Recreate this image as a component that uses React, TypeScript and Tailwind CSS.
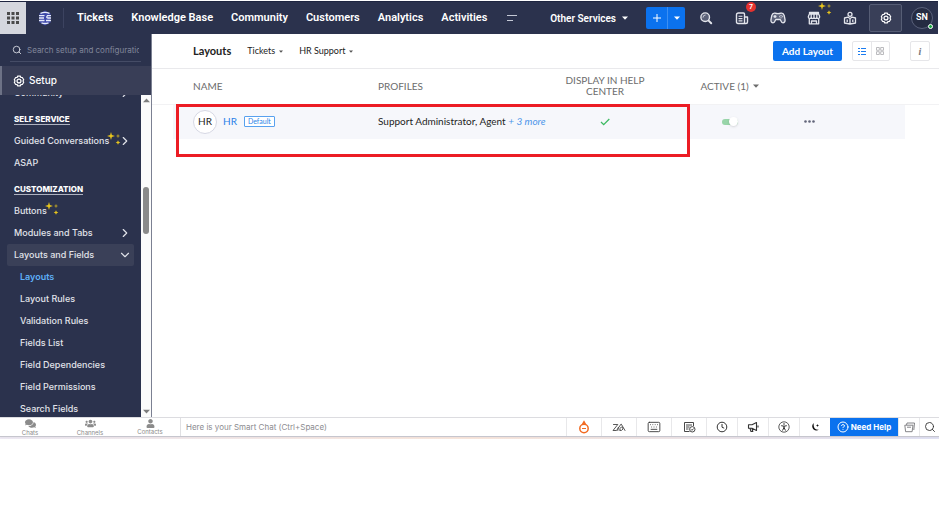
import { useState } from "react";
import type { ReactNode } from "react";
import { ChevronDown, ChevronRight, CircleHelp, Keyboard, Search } from "lucide-react";
import { FaComments, FaUser, FaUsers } from "react-icons/fa";

const tabs = ["Tickets", "Knowledge Base", "Community", "Customers", "Analytics", "Activities"];

const layoutLinks = [
  "Layouts",
  "Layout Rules",
  "Validation Rules",
  "Fields List",
  "Field Dependencies",
  "Field Permissions",
  "Search Fields",
];

function Caret({ className = "h-1 w-1.5" }: { className?: string }) {
  return (
    <svg viewBox="0 0 6 4" className={className} fill="currentColor">
      <path d="M0 .5h6L3 3.7z" />
    </svg>
  );
}

function Sparkles({ className = "" }: { className?: string }) {
  return (
    <svg viewBox="0 0 14 14" className={`h-3.5 w-3.5 ${className}`} fill="#e8c51c">
      <path d="M4 0l.9 3.1L8 4l-3.1.9L4 8l-.9-3.1L0 4l3.1-.9z" />
      <path d="M11 1.800l.6 1.600 1.600.6-1.600.6-.6 1.600-.6-1.600L8.800 4l1.600-.6z" opacity=".75" />
      <path d="M11 8.200l.7 1.600 1.600.7-1.600.7-.7 1.600-.7-1.600-1.600-.7 1.600-.7z" />
    </svg>
  );
}

function GearIcon({ className = "" }: { className?: string }) {
  return (
    <svg viewBox="0 0 14 14" className={className} fill="none" stroke="currentColor" strokeWidth="1.400" strokeLinejoin="round">
      <path d="M5.500 1.300h3l.7 1.500 1.700.1 1.600 2.600-.9 1.500.9 1.500-1.600 2.600-1.700.1-.7 1.500h-3l-.7-1.500-1.700-.1L1.500 8.500 2.400 7l-.9-1.500 1.600-2.600 1.700-.1z" />
      <circle cx="7" cy="7" r="2.300" />
    </svg>
  );
}

function Logo() {
  return (
    <svg viewBox="0 0 14 16" className="h-4 w-3.5">
      <path d="M7 .5l5.500 3v9l-5.500 3-5.500-3v-9z" fill="#3c46a8" />
      <path
        d="M2.500 3.300Q7 1.300 11.500 3.300M1 5.600h5.500M1 8h5M1 10.500h5.500M13 5.600H9.500Q7.800 8 10 8h3M13 10.500H8M3.500 12.900q3.500 1.200 7 0"
        fill="none"
        stroke="#e6ebfa"
        strokeWidth="1.300"
      />
    </svg>
  );
}

function HeaderButton({ label, children }: { label: string; children: ReactNode }) {
  return (
    <button aria-label={label} className="relative flex h-7 w-9 items-center justify-center text-[#e3e5ec]">
      {children}
    </button>
  );
}

function TopBar() {
  return (
    <header className="mt-px mr-px flex h-[33px] shrink-0 items-center border-t border-[#1e2540] bg-[#2b324d] font-['Roboto','Inter',sans-serif] text-[11px] font-semibold text-white">
      <button aria-label="Apps" className="flex h-full w-[26px] items-center justify-center bg-[#d5d7de]">
        <svg viewBox="0 0 12 12" className="h-3 w-3" fill="#4a4a4a">
          {[0, 4.5, 9].map((y) =>
            [0, 4.5, 9].map((x) => <rect key={`${x}-${y}`} x={x} y={y} width="3" height="3" />),
          )}
        </svg>
      </button>
      <a href="#home" aria-label="Home" className="flex h-5 w-[38px] items-center justify-center border-r border-[#3c4360]">
        <Logo />
      </a>
      <nav className="ml-[13px] flex items-center gap-[18px] whitespace-nowrap">
        {tabs.map((tab) => (
          <a key={tab} href="#tab">
            {tab}
          </a>
        ))}
      </nav>
      <button aria-label="More tabs" className="ml-5">
        <svg viewBox="0 0 10 6" className="h-1.5 w-2.5" stroke="#c5c9d6">
          <path d="M0 .5h10M0 5.500h6" />
        </svg>
      </button>
      <div className="ml-auto flex items-center">
        <button className="mr-[18px] flex items-center gap-1.5 text-[10px] whitespace-nowrap">
          Other Services <Caret />
        </button>
        <div className="mr-[3px] flex h-[22px] overflow-hidden rounded-xs bg-[#0b72ee]">
          <button aria-label="Add" className="flex w-[22px] items-center justify-center border-r border-[#3c8ff2]">
            <svg viewBox="0 0 8 8" className="h-2 w-2" stroke="white">
              <path d="M4 0v8M0 4h8" />
            </svg>
          </button>
          <button aria-label="Add options" className="flex w-[17px] items-center justify-center">
            <Caret />
          </button>
        </div>
        <HeaderButton label="Search">
          <svg viewBox="0 0 14 14" className="h-3.5 w-3.5" fill="none" stroke="currentColor" strokeWidth="1.400" strokeLinecap="round">
            <circle cx="6.200" cy="6.200" r="4.300" fill="#5a6078" />
            <path d="M4 6.200A2.200 2.200 0 0 1 6.200 4" strokeWidth=".8" />
            <path d="M9.600 9.600l2.600 2.600" strokeWidth="2" />
          </svg>
        </HeaderButton>
        <HeaderButton label="Notifications">
          <svg viewBox="0 0 14 14" className="h-3.5 w-3.5" fill="none" stroke="currentColor" strokeWidth="1.400" strokeLinejoin="round">
            <path d="M3.500 2h5q1 0 1 1v9.500H3q-1.500 0-1.500-1.500V4q0-2 2-2zM9.500 6h3v5q0 1.500-1.500 1.500H9" />
            <path d="M3.500 5.300h4M3.500 7.600h4M3.500 9.900h4" strokeWidth="1.100" />
          </svg>
          <span className="absolute -top-0.5 right-1 flex h-2.5 w-2.5 items-center justify-center rounded-full bg-[#e5322f] text-[7px] text-white">
            7
          </span>
        </HeaderButton>
        <HeaderButton label="Gamescope">
          <svg viewBox="0 0 16 14" className="h-3.5 w-4" fill="none" stroke="currentColor" strokeWidth="1.300" strokeLinejoin="round">
            <path d="M5 2.200q3 1 6 0 2.300-.5 3.200 2.300l.9 4.500q0 2.800-2.200 2.800-1.400 0-2-2l-.7-1.300H5.800l-.7 1.300q-.6 2-2 2Q.9 11.800.9 9l.9-4.500q.9-2.800 3.200-2.300z" fill="#5a6078" />
            <path d="M5 4v3M3.500 5.500h3M9.300 5.500h.9M11.800 5.500h.9M11 3.900v.8M11 6.400v.8" />
          </svg>
        </HeaderButton>
        <HeaderButton label="Marketplace">
          <svg viewBox="0 0 14 14" className="h-3.5 w-3.5" fill="none" stroke="currentColor" strokeWidth="1.300" strokeLinejoin="round">
            <path d="M2.500 1.500h9v1.500h-9zM2 3.500L1.300 6q0 1.500 1.400 1.500T4.200 6q0 1.500 1.400 1.500T7 6q0 1.500 1.400 1.500T9.800 6q0 1.500 1.400 1.500T12.700 6L12 3.500M4.200 6V3.500M7 6V3.500M9.800 6V3.500" />
            <path d="M2.300 8v4.800h9.400V8M4.500 12.500V10h5v2.500" />
          </svg>
          <Sparkles className="absolute -top-0.5 right-0" />
        </HeaderButton>
        <HeaderButton label="Help resources">
          <svg viewBox="0 0 14 14" className="h-3.5 w-3.5" fill="none" stroke="currentColor" strokeWidth="1.300" strokeLinejoin="round">
            <circle cx="7" cy="3.300" r="2" />
            <path d="M7 7.500L5 6.200 1.500 7v5L7 13l5.500-1V7L9 6.200zM7 7.500V13M4.200 8.500v2.500M9.800 8.500v2.500" />
          </svg>
        </HeaderButton>
        <button aria-label="Setup" className="ml-px flex h-7 w-[33px] items-center justify-center rounded-xs border border-[#565d75] bg-[#393f58]">
          <GearIcon className="h-3 w-3" />
        </button>
        <button aria-label="Profile" className="relative mr-[5px] ml-[9px] flex h-[22px] w-[22px] items-center justify-center rounded-full border border-[#59607a] bg-[#252b42] text-[9px]">
          SN
          <span className="absolute -right-px -bottom-px h-[5px] w-[5px] rounded-full border border-white bg-[#17a83c]" />
        </button>
      </div>
    </header>
  );
}

function SideItem({ label, icon, isNew }: { label: string; icon?: "right" | "down"; isNew?: boolean }) {
  return (
    <a
      href="#section"
      className={`mr-[7px] ml-[7px] flex h-[22px] items-center rounded-xs pr-0.5 pl-[7px] ${icon === "down" ? "bg-[#3a4058]" : ""}`}
    >
      <span className="whitespace-nowrap">{label}</span>
      {isNew && <Sparkles className="-mt-1 -mr-1 -ml-0.5 shrink-0" />}
      {icon === "right" && <ChevronRight size={14} className="ml-auto shrink-0" />}
      {icon === "down" && <ChevronDown size={14} className="ml-auto shrink-0" />}
    </a>
  );
}

function SideHeading({ children }: { children: ReactNode }) {
  return (
    <h2 className="mt-[5px] flex h-[21px] items-center pl-3.5 text-[8px] font-extrabold text-white">
      <span className="border-b border-[#aeb2c0] leading-[10px]">{children}</span>
    </h2>
  );
}

function Sidebar() {
  return (
    <aside className="flex w-[152px] shrink-0 flex-col border-r border-[#7b8092] bg-[#2b324d] text-[9px] font-medium text-[#e1e3ea]">
      <label className="mx-2.5 flex h-7 shrink-0 items-center gap-[5px] border-b border-[#454c66] pt-1 pr-0.5 pl-0.5">
        <Search size={10} className="shrink-0" />
        <input
          aria-label="Search setup"
          placeholder="Search setup and configuration"
          className="w-full min-w-0 text-[8px] font-normal outline-none placeholder:text-[#81869a]"
        />
      </label>
      <div className="mt-1 flex h-[29px] shrink-0 items-center gap-1 border-l-2 border-[#6d7286] bg-[#393e57] pl-[11px] text-[10px] text-white">
        <GearIcon className="h-3 w-3" />
        Setup
      </div>
      <div className="flex min-h-0 flex-1">
        <nav className="min-w-0 flex-1 overflow-hidden">
          <div className="-mt-[13px]">
            <SideItem label="Community" icon="right" />
            <SideHeading>SELF SERVICE</SideHeading>
            <SideItem label="Guided Conversations" icon="right" isNew />
            <SideItem label="ASAP" />
            <SideHeading>CUSTOMIZATION</SideHeading>
            <SideItem label="Buttons" isNew />
            <SideItem label="Modules and Tabs" icon="right" />
            <SideItem label="Layouts and Fields" icon="down" />
            {layoutLinks.map((link) => (
              <a
                key={link}
                href="#layouts"
                className={`flex h-[22px] items-center pl-5 ${link === "Layouts" ? "font-semibold text-[#5fb0f8]" : ""}`}
              >
                {link}
              </a>
            ))}
          </div>
        </nav>
        <div className="flex w-2.5 flex-col items-center bg-[#fbfbfb] py-[3px] text-[#7d7d7d]">
          <Caret className="h-[5px] w-[7px] rotate-180" />
          <span className="mt-[84px] h-[47px] w-1.5 rounded-full bg-[#8a8a8a]" />
          <Caret className="mt-auto h-[5px] w-[7px]" />
        </div>
      </div>
    </aside>
  );
}

function LayoutsTable() {
  const [active, setActive] = useState(true);

  return (
    <div className="relative">
      <table className="w-full table-fixed text-left">
        <colgroup>
          <col className="w-[21px]" />
          <col className="w-[185px]" />
          <col className="w-[197px]" />
          <col className="w-[100px]" />
          <col className="w-[149px]" />
          <col />
          <col className="w-[34px]" />
        </colgroup>
        <thead>
          <tr className="h-[35px] border-b border-[#f2f2f4] text-[10px] leading-[11px] text-[#6c6c6c]">
            <td />
            <th className="pl-5 font-normal">NAME</th>
            <th className="pl-5 font-normal">PROFILES</th>
            <th className="px-1 text-center font-normal">DISPLAY IN HELP CENTER</th>
            <th className="text-center font-normal">
              <button className="inline-flex items-center gap-1">
                ACTIVE (1) <Caret />
              </button>
            </th>
            <td />
            <td />
          </tr>
        </thead>
        <tbody>
          <tr className="h-[35px] text-[10px] text-[#1d1d1d]">
            <td />
            <td className="bg-[#f6f7fb] pl-5">
              <div className="flex items-center">
                <span className="flex h-6 w-6 items-center justify-center rounded-full border border-[#d6d8e4] bg-white">HR</span>
                <a href="#hr" className="ml-1.5 text-[#2a7fe8]">
                  HR
                </a>
                <span className="ml-[7px] rounded-[1px] border border-[#58a1ef] bg-white px-[3px] text-[7px] leading-[9px] text-[#2a85e8]">
                  Default
                </span>
              </div>
            </td>
            <td className="bg-[#f6f7fb] pl-5 whitespace-nowrap">
              Support Administrator, Agent{" "}
              <a href="#more" className="text-[#4c96ea] italic">
                + 3 more
              </a>
            </td>
            <td className="bg-[#f6f7fb]">
              <svg viewBox="0 0 10 8" className="mx-auto h-2 w-2.5" fill="none" stroke="#3dba62" strokeWidth="1.300">
                <path d="M1 4l2.700 2.700L9.300 1" />
              </svg>
            </td>
            <td className="bg-[#f6f7fb]">
              <label className="relative mx-auto flex w-4 cursor-pointer items-center">
                <input
                  type="checkbox"
                  role="switch"
                  aria-label="Active"
                  className="peer sr-only"
                  checked={active}
                  onChange={(e) => setActive(e.target.checked)}
                />
                <span className="flex h-1.5 w-4 items-center rounded-full bg-gray-300 peer-checked:justify-end peer-checked:bg-[#98d5a9]">
                  <span className="h-[9px] w-[9px] rounded-full bg-white shadow-sm" />
                </span>
              </label>
            </td>
            <td className="bg-[#f6f7fb]">
              <button aria-label="More actions" className="flex items-center">
                <svg viewBox="0 0 11 3" className="h-[3px] w-[11px]" fill="#626579">
                  <circle cx="1.500" cy="1.500" r="1.300" />
                  <circle cx="5.500" cy="1.500" r="1.300" />
                  <circle cx="9.500" cy="1.500" r="1.300" />
                </svg>
              </button>
            </td>
            <td />
          </tr>
        </tbody>
      </table>
      <div className="pointer-events-none absolute top-[35px] left-6 h-[53px] w-[514px] border-3 border-[#ec1c24]" />
    </div>
  );
}

function Content() {
  return (
    <main className="min-w-0 flex-1 bg-white font-['Lato',sans-serif]">
      <div className="flex h-[35px] items-center border-b border-[#e9e9ec] pr-[9px] pl-[41px] text-[9px] whitespace-nowrap text-[#222]">
        <h1 className="text-[11px] font-bold">Layouts</h1>
        <button className="ml-4 flex items-center gap-1">
          Tickets <Caret className="h-[3px] w-1 text-[#555]" />
        </button>
        <button className="ml-4 flex items-center gap-1">
          HR Support <Caret className="h-[3px] w-1 text-[#555]" />
        </button>
        <button className="ml-auto h-5 w-[69px] rounded-xs bg-[#0b72ee] text-[10px] font-bold text-white">Add Layout</button>
        <div className="ml-2.5 flex h-5 w-[38px] rounded-xs border border-[#e6e6e9]">
          <button aria-label="List view" className="flex flex-1 items-center justify-center border-r border-[#e6e6e9]">
            <svg viewBox="0 0 8 8" className="h-2 w-2" stroke="#1b7cf0">
              <path d="M0 1.500h2M0 4.500h2M0 7.500h2M3 1.500h5M3 4.500h5M3 7.500h5" />
            </svg>
          </button>
          <button aria-label="Grid view" className="flex flex-1 items-center justify-center">
            <svg viewBox="0 0 8 8" className="h-2 w-2" fill="none" stroke="#a9a9ad" strokeWidth=".8">
              <path d="M.5.5h2.800v2.800H.5zM4.700.5h2.800v2.800H4.700zM.5 4.700h2.800v2.800H.5zM4.700 4.700h2.800v2.800H4.700z" />
            </svg>
          </button>
        </div>
        <button aria-label="Info" className="ml-5 h-5 w-5 rounded-xs border border-[#e6e6e9] font-['Liberation_Serif',serif] text-[10px] font-bold text-[#77777b] italic">
          i
        </button>
      </div>
      <LayoutsTable />
    </main>
  );
}

function ChatTab({ label, children }: { label: string; children: ReactNode }) {
  return (
    <button className="flex w-[60px] flex-col items-center text-[#8b8b8b]">
      {children}
      <span className="text-[6px] leading-[7px]">{label}</span>
    </button>
  );
}

function BarButton({ label, className = "w-[31px]", children }: { label: string; className?: string; children: ReactNode }) {
  return (
    <button aria-label={label} className={`flex h-full items-center justify-center border-l border-[#e8e8ea] ${className}`}>
      {children}
    </button>
  );
}

function ChatBar() {
  return (
    <footer className="flex h-5 shrink-0 items-center border-t border-b border-t-[#dcdce0] border-b-[#c6c6ce] bg-white text-[#333] shadow-xs">
      <ChatTab label="Chats">
        <FaComments size={11} />
      </ChatTab>
      <ChatTab label="Channels">
        <FaUsers size={11} />
      </ChatTab>
      <ChatTab label="Contacts">
        <FaUser size={9} />
      </ChatTab>
      <input
        aria-label="Smart Chat"
        placeholder="Here is your Smart Chat (Ctrl+Space)"
        className="h-full min-w-0 flex-1 border-l border-[#e0e0e3] pl-[5px] text-[8px] outline-none placeholder:text-[#8c8c90]"
      />
      <BarButton label="Timer" className="w-[35px]">
        <svg viewBox="0 0 12 14" className="h-3.5 w-3" fill="none" stroke="#f26a21" strokeWidth="1.500">
          <circle cx="6" cy="8.500" r="4.200" />
          <path d="M6 1v3M4.500 4L6 1.500 7.500 4M4 8.500h4" strokeWidth="1.200" />
        </svg>
      </BarButton>
      <BarButton label="Zia" className="w-[35px]">
        <svg viewBox="0 0 14 9" className="h-[9px] w-3.5" fill="none" stroke="#444" strokeLinecap="round" strokeLinejoin="round">
          <path
            d="M1.500 1.500h4.300L1 7.500h3.500L9 1.200M6.300 4.500L5.800 7.500M8 7.500q-1-2.500 1.200-3.300 2-.4 1.800 1.800-1 2-3 1.500M9.500 1.500l3.500 6"
            strokeWidth=".9"
          />
        </svg>
      </BarButton>
      <BarButton label="Keyboard shortcuts" className="w-[35px]">
        <Keyboard size={14} strokeWidth={1.5} />
      </BarButton>
      <BarButton label="Tasks" className="w-[35px]">
        <svg viewBox="0 0 13 12" className="h-3 w-[13px]" fill="none" stroke="currentColor" strokeWidth=".9">
          <path d="M6.500 10.500h-5v-9h9V5M3 4h6M3 6h3.500M3 8h2.500" />
          <circle cx="9.300" cy="8.300" r="2.700" />
          <path d="M8 8.300l1 1 1.600-1.800" />
        </svg>
      </BarButton>
      <BarButton label="History">
        <svg viewBox="0 0 12 12" className="h-3 w-3" fill="none" stroke="currentColor">
          <circle cx="6" cy="6" r="4.800" />
          <path d="M6 3v3.200l2.200 1" />
        </svg>
      </BarButton>
      <BarButton label="Announcements">
        <svg viewBox="0 0 12 12" className="h-3 w-3" fill="none" stroke="currentColor" strokeWidth="1.100" strokeLinejoin="round">
          <path d="M1.500 3.800H5l4.500-2.300v8L5 7.200H1.500zM3 7.300l1 3.200h1.800L5 7.300M11 4.500v2" />
        </svg>
      </BarButton>
      <BarButton label="Accessibility">
        <svg viewBox="0 0 12 12" className="h-3 w-3" fill="none" stroke="currentColor">
          <circle cx="6" cy="6" r="5.200" strokeWidth=".8" />
          <circle cx="6" cy="3" r=".8" fill="currentColor" stroke="none" />
          <path d="M3.200 4.700L6 5.200l2.800-.5M6 5v2M4.500 9.500L6 6.500l1.500 3" />
        </svg>
      </BarButton>
      <BarButton label="Night mode">
        <svg viewBox="0 0 10 10" className="h-2.5 w-2.5" fill="#111">
          <path d="M3.800 1A4.200 4.200 0 1 0 9 7.600Q5 8 4 5 3.400 3 3.800 1zM7.500 2l.4 1.100 1.100.4-1.100.4-.4 1.100-.4-1.100L6 3.500l1.100-.4z" />
        </svg>
      </BarButton>
      <button className="flex h-full w-[68px] items-center justify-center gap-0.5 bg-[#0b72ee] text-[8px] font-bold whitespace-nowrap text-white">
        <CircleHelp size={12} /> Need Help
      </button>
      <BarButton label="Windows" className="w-[21px]">
        <svg viewBox="0 0 11 11" className="h-[11px] w-[11px]" fill="none" stroke="#77777b" strokeWidth=".9" strokeLinejoin="round">
          <path d="M2.500 3l.5-2h7.500L9.800 8M.8 3.200h8.200l-.9 6.500H1.600zM3 5.200h4" />
        </svg>
      </BarButton>
      <BarButton label="Search chats" className="w-5">
        <Search size={12} strokeWidth={1.8} />
      </BarButton>
    </footer>
  );
}

export default function App() {
  return (
    <div className="min-h-screen bg-white font-['Inter','Liberation_Sans',sans-serif]">
      <div className="flex h-[calc(100vh-91px)] flex-col">
        <TopBar />
        <div className="flex min-h-0 flex-1">
          <Sidebar />
          <Content />
        </div>
        <ChatBar />
      </div>
      <div className="h-0.5 bg-linear-to-r from-[#f0ecf6] via-[#fbe9df] to-[#e3e4f6]" />
    </div>
  );
}
